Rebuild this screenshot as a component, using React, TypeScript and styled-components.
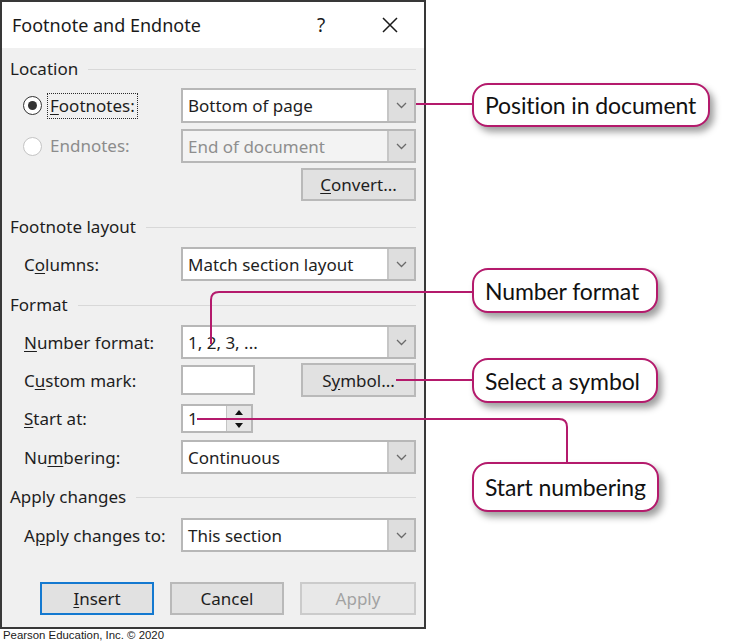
import React from "react";
import styled, { createGlobalStyle } from "styled-components";

const MAGENTA = "#b41a6c";

const GlobalStyle = createGlobalStyle`
  html, body { margin: 0; padding: 0; background: #ffffff; }
  body {
    width: 744px;
    height: 644px;
    overflow: hidden;
    font-family: "Noto Sans", "Open Sans", sans-serif;
    color: #1e1e1e;
  }
`;

const Page = styled.div`
  position: relative;
  width: 744px;
  height: 644px;
  display: flex;
  align-items: flex-start;
  background: #ffffff;
`;

const DialogColumn = styled.div`
  display: flex;
  flex-direction: column;
  width: 426px;
`;

const Dialog = styled.div`
  box-sizing: border-box;
  width: 426px;
  height: 629px;
  border: 2px solid #383838;
  background: #f0f0f0;
  display: flex;
  flex-direction: column;
`;

const TitleBar = styled.div`
  height: 46px;
  flex: none;
  background: #ffffff;
  display: flex;
  align-items: center;
  padding: 0 11px 0 10px;
`;

const Title = styled.div`
  flex: 1;
  font-size: 18px;
  color: #1a1a1a;
`;

const TitleButton = styled.div<{ $ml?: number }>`
  width: 46px;
  height: 46px;
  margin-left: ${(p) => p.$ml ?? 0}px;
  display: flex;
  align-items: center;
  justify-content: center;
  font-size: 19px;
  color: #1a1a1a;
`;

const Body = styled.div`
  flex: 1;
  display: flex;
  flex-direction: column;
  padding: 10px 8px 0 8px;
`;

const Heading = styled.div<{ $mt?: number }>`
  margin-top: ${(p) => p.$mt ?? 0}px;
  height: 22px;
  line-height: 22px;
  font-size: 17px;
  display: flex;
  align-items: center;
  color: #1e1e1e;
  &::after {
    content: "";
    flex: 1;
    height: 1px;
    margin-left: 10px;
    background: #d8d8d8;
  }
`;

const Row = styled.div<{ $mt?: number; $h?: number }>`
  margin-top: ${(p) => p.$mt ?? 0}px;
  height: ${(p) => p.$h ?? 34}px;
  padding-left: 14px;
  display: grid;
  grid-template-columns: 157px 1fr;
  align-items: center;
`;

const Label = styled.div<{ $disabled?: boolean }>`
  font-size: 17px;
  color: ${(p) => (p.$disabled ? "#8c8c8c" : "#1e1e1e")};
  display: flex;
  align-items: center;
  white-space: nowrap;
`;

const U = styled.span`
  text-decoration: underline;
  text-underline-offset: 2px;
`;

const RadioCircle = styled.span<{ $checked?: boolean }>`
  box-sizing: border-box;
  width: 19px;
  height: 19px;
  margin-left: -1px;
  margin-right: 6px;
  border-radius: 50%;
  border: 1.6px solid ${(p) => (p.$checked ? "#333333" : "#c4c4c4")};
  background: #ffffff;
  display: flex;
  align-items: center;
  justify-content: center;
  &::after {
    content: "";
    width: 9px;
    height: 9px;
    border-radius: 50%;
    background: ${(p) => (p.$checked ? "#333333" : "transparent")};
  }
`;

const FocusText = styled.span<{ $focused?: boolean }>`
  padding: 1px 2px;
  outline: ${(p) => (p.$focused ? "1px dotted #2a2a2a" : "none")};
  outline-offset: 0;
  line-height: 22px;
`;

const ComboBox = styled.div<{ $disabled?: boolean; $h?: number }>`
  box-sizing: border-box;
  height: ${(p) => p.$h ?? 34}px;
  width: 100%;
  display: flex;
  align-items: stretch;
  border: 2px solid #b7b7b7;
  background: ${(p) => (p.$disabled ? "#f3f3f3" : "#ffffff")};
`;

const ComboText = styled.div<{ $disabled?: boolean }>`
  flex: 1;
  padding-left: 5px;
  display: flex;
  align-items: center;
  font-size: 17px;
  color: ${(p) => (p.$disabled ? "#8e8e8e" : "#1e1e1e")};
  white-space: nowrap;
`;

const DropButton = styled.div`
  width: 25px;
  background: #dedede;
  border-left: 2px solid #c6c6c6;
  display: flex;
  align-items: center;
  justify-content: center;
`;

const PushButton = styled.div<{ $w?: number; $h?: number; $default?: boolean; $disabled?: boolean }>`
  box-sizing: border-box;
  width: ${(p) => p.$w ?? 115}px;
  height: ${(p) => p.$h ?? 33}px;
  background: ${(p) => (p.$disabled ? "#e8e8e8" : "#e1e1e1")};
  border: 2px solid
    ${(p) => (p.$default ? "#1479d0" : p.$disabled ? "#cbcbcb" : "#b9b9b9")};
  display: flex;
  align-items: center;
  justify-content: center;
  font-size: 17px;
  color: ${(p) => (p.$disabled ? "#a2a2a2" : "#1e1e1e")};
`;

const ControlEnd = styled.div`
  display: flex;
  justify-content: flex-end;
  align-items: center;
`;

const ControlSplit = styled.div`
  display: flex;
  justify-content: space-between;
  align-items: center;
`;

const TextInput = styled.div`
  box-sizing: border-box;
  width: 74px;
  height: 30px;
  border: 2px solid #b7b7b7;
  background: #ffffff;
`;

const SpinBox = styled.div`
  box-sizing: border-box;
  width: 72px;
  height: 29px;
  border: 2px solid #b7b7b7;
  background: #ffffff;
  display: flex;
`;

const SpinText = styled.div`
  flex: 1;
  padding-left: 5px;
  display: flex;
  align-items: center;
  font-size: 17px;
  color: #1e1e1e;
`;

const SpinButtons = styled.div`
  width: 24px;
  display: flex;
  flex-direction: column;
  background: #e6e6e6;
  border-left: 1px solid #c4c4c4;
`;

const SpinHalf = styled.div`
  flex: 1;
  display: flex;
  align-items: center;
  justify-content: center;
  & + & {
    border-top: 1px solid #c8c8c8;
  }
`;

const ButtonRow = styled.div<{ $mt?: number }>`
  margin-top: ${(p) => p.$mt ?? 0}px;
  display: flex;
  justify-content: flex-end;
  gap: 16px;
`;

const Caption = styled.div`
  padding-left: 3px;
  margin-top: 0px;
  font-family: "Liberation Sans", Arial, sans-serif;
  font-size: 11.4px;
  line-height: 12px;
  color: #1a1a1a;
`;

const CalloutColumn = styled.div`
  display: flex;
  flex-direction: column;
  align-items: flex-start;
  padding-left: 46px;
`;

const Callout = styled.div<{ $w: number; $h: number; $mt: number }>`
  box-sizing: border-box;
  width: ${(p) => p.$w}px;
  height: ${(p) => p.$h}px;
  margin-top: ${(p) => p.$mt}px;
  border: 2px solid ${MAGENTA};
  border-radius: 16px;
  background: #ffffff;
  box-shadow: 4px 5px 7px rgba(0, 0, 0, 0.38);
  padding-left: 11px;
  display: flex;
  align-items: center;
  font-family: Lato, "Noto Sans", sans-serif;
  font-size: 23px;
  letter-spacing: -0.1px;
  color: #111111;
  white-space: nowrap;
`;

const Connectors = styled.svg`
  position: absolute;
  left: 0;
  top: 0;
  width: 744px;
  height: 644px;
  pointer-events: none;
`;

const Chevron = () => (
  <svg width="11" height="7" viewBox="0 0 11 7">
    <path d="M1 1 L5.5 5.5 L10 1" fill="none" stroke="#6a6a6a" strokeWidth="1.3" />
  </svg>
);

const CloseIcon = () => (
  <svg width="16" height="16" viewBox="0 0 16 16">
    <path d="M1 1 L15 15 M15 1 L1 15" stroke="#1a1a1a" strokeWidth="1.5" fill="none" />
  </svg>
);

const Arrow = ({ up }: { up?: boolean }) => (
  <svg width="8" height="5" viewBox="0 0 8 5">
    <path d={up ? "M0 5 L4 0 L8 5 Z" : "M0 0 L8 0 L4 5 Z"} fill="#111" />
  </svg>
);

const Combo = ({ text, disabled, h }: { text: string; disabled?: boolean; h?: number }) => (
  <ComboBox $disabled={disabled} $h={h}>
    <ComboText $disabled={disabled}>{text}</ComboText>
    <DropButton>
      <Chevron />
    </DropButton>
  </ComboBox>
);

export default function App() {
  return (
    <>
      <GlobalStyle />
      <Page>
        <DialogColumn>
          <Dialog>
            <TitleBar>
              <Title>Footnote and Endnote</Title>
              <TitleButton>?</TitleButton>
              <TitleButton $ml={23}>
                <CloseIcon />
              </TitleButton>
            </TitleBar>
            <Body>
              <Heading>Location</Heading>
              <Row $mt={8} $h={35}>
                <Label>
                  <RadioCircle $checked />
                  <FocusText $focused>
                    <U>F</U>ootnotes:
                  </FocusText>
                </Label>
                <Combo text="Bottom of page" h={35} />
              </Row>
              <Row $mt={6}>
                <Label $disabled>
                  <RadioCircle />
                  <FocusText>Endnotes:</FocusText>
                </Label>
                <Combo text="End of document" disabled />
              </Row>
              <Row $mt={5} $h={33}>
                <span />
                <ControlEnd>
                  <PushButton>
                    <U>C</U>onvert...
                  </PushButton>
                </ControlEnd>
              </Row>

              <Heading $mt={15}>Footnote layout</Heading>
              <Row $mt={9}>
                <Label>
                  C<U>o</U>lumns:
                </Label>
                <Combo text="Match section layout" />
              </Row>

              <Heading $mt={13}>Format</Heading>
              <Row $mt={9}>
                <Label>
                  <U>N</U>umber format:
                </Label>
                <Combo text="1, 2, 3, ..." />
              </Row>
              <Row $mt={4}>
                <Label>
                  C<U>u</U>stom mark:
                </Label>
                <ControlSplit>
                  <TextInput />
                  <PushButton $h={34}>
                    S<U>y</U>mbol...
                  </PushButton>
                </ControlSplit>
              </Row>
              <Row $mt={7} $h={29}>
                <Label>
                  <U>S</U>tart at:
                </Label>
                <SpinBox>
                  <SpinText>1</SpinText>
                  <SpinButtons>
                    <SpinHalf>
                      <Arrow up />
                    </SpinHalf>
                    <SpinHalf>
                      <Arrow />
                    </SpinHalf>
                  </SpinButtons>
                </SpinBox>
              </Row>
              <Row $mt={7}>
                <Label>
                  Nu<U>m</U>bering:
                </Label>
                <Combo text="Continuous" />
              </Row>

              <Heading $mt={12}>Apply changes</Heading>
              <Row $mt={10}>
                <Label>
                  A<U>p</U>ply changes to:
                </Label>
                <Combo text="This section" />
              </Row>

              <ButtonRow $mt={30}>
                <PushButton $w={114} $default>
                  <U>I</U>nsert
                </PushButton>
                <PushButton $w={114}>Cancel</PushButton>
                <PushButton $w={116} $disabled>
                  Apply
                </PushButton>
              </ButtonRow>
            </Body>
          </Dialog>
          <Caption>Pearson Education, Inc. © 2020</Caption>
        </DialogColumn>

        <CalloutColumn>
          <Callout $w={238} $h={44} $mt={83}>
            Position in document
          </Callout>
          <Callout $w={186} $h={45} $mt={141}>
            Number format
          </Callout>
          <Callout $w={186} $h={45} $mt={45}>
            Select a symbol
          </Callout>
          <Callout $w={187} $h={50} $mt={59}>
            Start numbering
          </Callout>
        </CalloutColumn>

        <Connectors viewBox="0 0 744 644">
          <g fill="none" stroke={MAGENTA} strokeWidth="2">
            <path d="M416 104 H472" />
            <path d="M472 292 H219 Q211 292 211 300 V344" />
            <path d="M396 380 H472" />
            <path d="M197 419 H559 Q567 419 567 427 V462" />
          </g>
        </Connectors>
      </Page>
    </>
  );
}
